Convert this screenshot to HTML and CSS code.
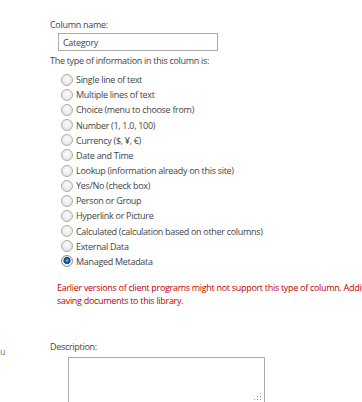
FILE: index.html
```html
<!DOCTYPE html>
<html lang="en">
<head>
    <meta charset="UTF-8">
    <title>Create Column</title>
    <link rel="stylesheet" href="styles.css">
</head>
<body>
    <div class="section">
        <div class="label">Column name:</div>
        <input type="text" class="name-field" value="Category">
        <div class="label type-label">The type of information in this column is:</div>
        <div class="type-list">
            <label class="type-row"><input type="radio" name="type">Single line of text</label>
            <label class="type-row"><input type="radio" name="type">Multiple lines of text</label>
            <label class="type-row"><input type="radio" name="type">Choice (menu to choose from)</label>
            <label class="type-row"><input type="radio" name="type">Number (1, 1.0, 100)</label>
            <label class="type-row"><input type="radio" name="type">Currency ($, ¥, €)</label>
            <label class="type-row"><input type="radio" name="type">Date and Time</label>
            <label class="type-row"><input type="radio" name="type">Lookup (information already on this site)</label>
            <label class="type-row"><input type="radio" name="type">Yes/No (check box)</label>
            <label class="type-row"><input type="radio" name="type">Person or Group</label>
            <label class="type-row"><input type="radio" name="type">Hyperlink or Picture</label>
            <label class="type-row"><input type="radio" name="type">Calculated (calculation based on other columns)</label>
            <label class="type-row"><input type="radio" name="type">External Data</label>
            <label class="type-row"><input type="radio" name="type" checked>Managed Metadata</label>
        </div>
        <div class="warning">
            Earlier versions of client programs might not support this type of column. Adding this column might block some earlier versions of client programs from<br>
            saving documents to this library.
        </div>
    </div>

    <div class="desc-row">
        <div class="side-note">u</div>
        <div class="desc-body">
            <div class="label">Description:</div>
            <div class="desc-wrap">
                <textarea class="desc-field"></textarea>
                <!-- resize grip -->
                <svg class="grip" width="8" height="8" viewBox="0 0 8 8">
                    <rect x="6" y="0" width="1" height="1" fill="#9a9a9a"/>
                    <rect x="3" y="3" width="1" height="1" fill="#9a9a9a"/>
                    <rect x="6" y="3" width="1" height="1" fill="#9a9a9a"/>
                    <rect x="0" y="6" width="1" height="1" fill="#9a9a9a"/>
                    <rect x="3" y="6" width="1" height="1" fill="#9a9a9a"/>
                    <rect x="6" y="6" width="1" height="1" fill="#9a9a9a"/>
                </svg>
            </div>
        </div>
    </div>
</body>
</html>
```

FILE: styles.css
```css
body {
    margin: 0;
    padding: 18px 0 0 0;
    background: #ffffff;
    font-family: "Open Sans", "Noto Sans", sans-serif;
    font-size: 9px;
    letter-spacing: -0.3px;
    color: #444;
    overflow: hidden;
    width: 362px;
    height: 402px;
}

.section {
    padding-left: 50px;
}

.label {
    line-height: 13px;
    height: 13px;
}

.name-field {
    display: block;
    box-sizing: border-box;
    width: 160px;
    height: 18px;
    margin: 2px 0 0 8px;
    padding: 0 4px;
    border: 1px solid #ababab;
    font-family: inherit;
    font-size: 9px;
    letter-spacing: -0.3px;
    color: #444;
    outline: none;
}

.type-label {
    margin-top: 3px;
}

.type-list {
    margin: 5px 0 0 11px;
    display: flex;
    flex-direction: column;
}

.type-row {
    display: flex;
    align-items: center;
    height: 15.17px;
    white-space: nowrap;
}

.type-row input {
    -webkit-appearance: none;
    appearance: none;
    box-sizing: border-box;
    width: 12px;
    height: 12px;
    margin: 0 3px 0 0;
    border: 1px solid #adadad;
    border-radius: 50%;
    background: radial-gradient(circle at 50% 40%, #fbfbfb 0%, #ececec 55%, #d6d6d6 100%);
}

.type-row input:checked {
    border-color: #8a96a2;
    background: radial-gradient(circle at 50% 45%, #6cc0f0 0%, #2476bf 22%, #123f70 38%, #3a4f63 44%, #eeeeee 52%, #d9d9d9 100%);
}

.warning {
    margin: 13px 0 0 7px;
    width: 600px;
    line-height: 12.5px;
    color: #c00000;
    white-space: nowrap;
}

.desc-row {
    display: flex;
    margin-top: 33px;
}

.side-note {
    width: 50px;
    padding-top: 5px;
    line-height: 13px;
    color: #8a7a66;
}

.desc-body {
    display: flex;
    flex-direction: column;
}

.desc-wrap {
    position: relative;
    margin: 4px 0 0 18px;
}

.desc-field {
    display: block;
    box-sizing: border-box;
    width: 197px;
    height: 47px;
    border: 1px solid #ababab;
    font-family: inherit;
    resize: none;
}

.grip {
    position: absolute;
    right: 3px;
    bottom: 3px;
}
```
